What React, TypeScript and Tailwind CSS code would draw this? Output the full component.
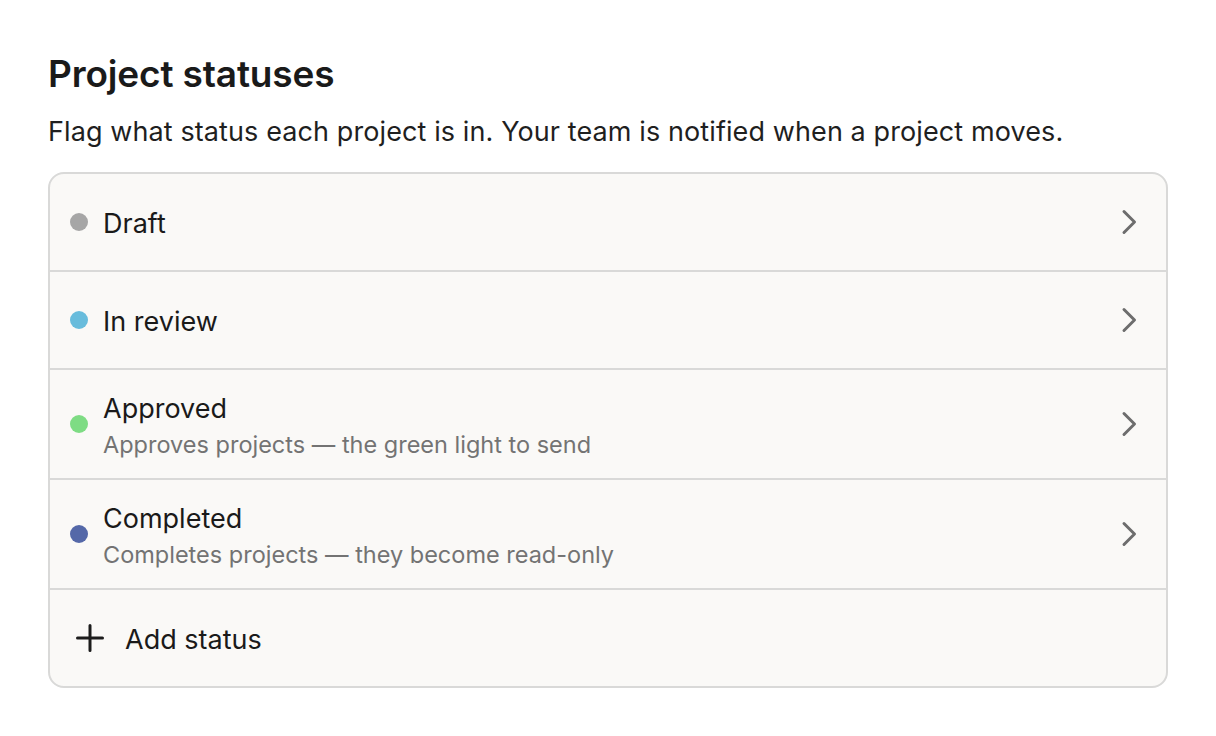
import React from "react";

type Status = { name: string; color: string; desc?: string };

const statuses: Status[] = [
  { name: "Draft", color: "bg-[#a6a6a6]" },
  { name: "In review", color: "bg-[#68bcdc]" },
  { name: "Approved", color: "bg-[#7edc84]", desc: "Approves projects — the green light to send" },
  { name: "Completed", color: "bg-[#5468a8]", desc: "Completes projects — they become read-only" },
];

function Chevron() {
  return (
    <svg width="16" height="26" viewBox="0 0 16 26" fill="none" className="shrink-0">
      <path d="M3 2.5 L13.5 13 L3 23.5" stroke="#6d6d6d" strokeWidth="3" strokeLinecap="round" strokeLinejoin="round" />
    </svg>
  );
}

function Plus() {
  return (
    <svg width="28" height="28" viewBox="0 0 28 28" fill="none" className="shrink-0">
      <path d="M14 1.5 V26.5 M1.5 14 H26.5" stroke="#1c1c1c" strokeWidth="3" strokeLinecap="round" />
    </svg>
  );
}

export default function App() {
  return (
    <div
      className="min-h-screen w-full bg-white text-[#1a1a1a]"
      style={{ fontFamily: "Inter, 'Noto Sans', sans-serif" }}
    >
      <div className="px-12 pt-[50px]">
        <h1 className="text-[37px] leading-[48px] font-semibold tracking-[-0.15px] text-[#1a1a1a]">
          Project statuses
        </h1>
        <p className="mt-[16px] text-[27px] leading-[36px] tracking-[0.1px] text-[#1f1f1f]">
          Flag what status each project is in. Your team is notified when a project moves.
        </p>
        <div className="mt-[22px] w-[1120px] rounded-[16px] border-2 border-[#d9d9d8] bg-[#faf9f7] overflow-hidden">
          {statuses.map((s) => (
            <div
              key={s.name}
              className={`flex items-center border-b-2 border-[#d9d9d8] pl-5 pr-[29px] ${
                s.desc ? "h-[110px]" : "h-[98px]"
              }`}
            >
              <span className={`h-[18px] w-[18px] rounded-full shrink-0 ${s.color}`} />
              <div className="ml-[15px] pt-[4px] flex-1 flex flex-col">
                <span className="text-[27px] leading-[34px] text-[#1a1a1a]">{s.name}</span>
                {s.desc && (
                  <span className="mt-[4px] text-[23.5px] leading-[30px] text-[#737373]">{s.desc}</span>
                )}
              </div>
              <Chevron />
            </div>
          ))}
          <div className="flex items-center h-[96px] pl-[26px]">
            <Plus />
            <span className="ml-[21px] pt-[4px] text-[27px] leading-[34px] text-[#1a1a1a]">Add status</span>
          </div>
        </div>
      </div>
    </div>
  );
}
